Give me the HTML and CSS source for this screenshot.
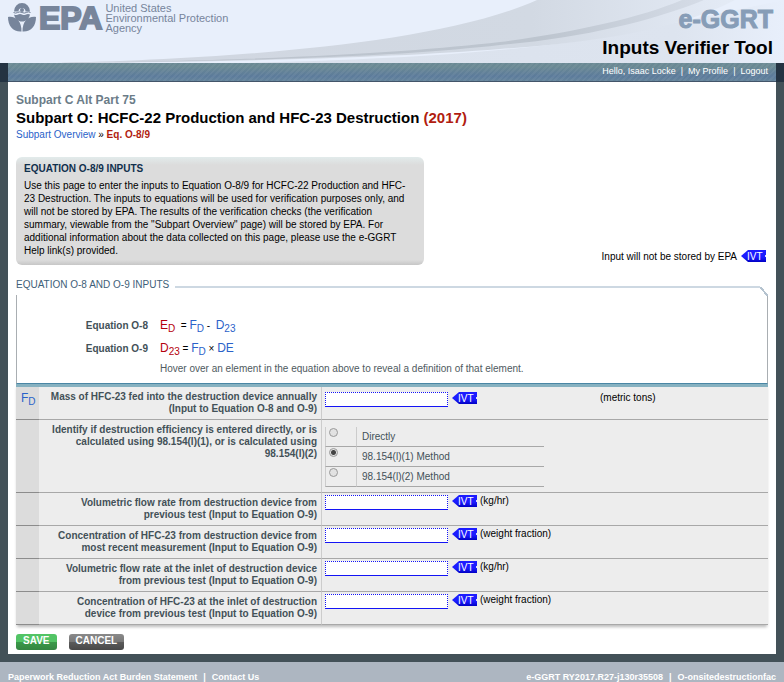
FILE: index.html
```html
<!DOCTYPE html>
<html lang="en">
<head>
  <meta charset="UTF-8" />
  <title>e-GGRT Inputs Verifier Tool</title>
  <link rel="stylesheet" href="styles.css">
</head>
<body>

  <header class="banner">
    <svg class="swoosh" viewBox="0 0 784 63" preserveAspectRatio="none">
      <defs>
        <linearGradient id="fade" x1="0" x2="1" y1="0" y2="0">
          <stop offset="0" stop-color="#dae1ec" />
          <stop offset=".8" stop-color="#dde4ef" />
          <stop offset="1" stop-color="#e8effb" />
        </linearGradient>
        <linearGradient id="fade2" x1="0" x2="1" y1="0" y2="0">
          <stop offset="0" stop-color="#d0d6e0" />
          <stop offset=".7" stop-color="#d2d9e3" />
          <stop offset="1" stop-color="#e4ebf6" />
        </linearGradient>
        <linearGradient id="fade3" x1="0" x2="1" y1="0" y2="0">
          <stop offset="0" stop-color="#bcc3cd" />
          <stop offset=".75" stop-color="#bdc5cf" />
          <stop offset="1" stop-color="#d5dce7" />
        </linearGradient>
      </defs>
      <path fill="url(#fade)" d="M240 63C400 60 560 49 640 30L784 0V63Z" />
      <path fill="url(#fade2)" d="M56 63C200 59 430 48 537 0H735C670 35 560 45 500 49C400 57 250 62 56 63Z" />
      <path fill="url(#fade3)" d="M56 63C300 60 420 51 500 42C570 33 640 18 682 0H704C650 22 580 38 500 45C420 54 300 61 56 63Z" />
    </svg>
    <div class="epa">
      <svg class="flower" viewBox="0 0 28 29" width="28" height="29">
        <g fill="#77859b">
          <path fill-rule="evenodd" d="M6 8.500a8 8.500 0 0 1 16 0H17.500a3.500 3.500 0 1 0-7 0Z" />
          <circle cx="14" cy="7" r="2" />
          <path d="M6 11.500q2 1.200 4 0t4 0t4 0t4 0C21 16 18 18.500 14 18.500S7 16 6 11.500Z" />
          <path d="M0 14C8 13 13.500 18 13.500 28.500C5 29 0 23 0 14Z" />
          <path d="M28 14C20 13 14.500 18 14.500 28.500C23 29 28 23 28 14Z" />
        </g>
        <path fill="none" stroke="#77859b" d="M5.500 9.500q2.100 1.200 4.200 0t4.300 0t4.300 0t4.200 0" />
      </svg>
      <span class="epa-name">EPA</span>
      <span class="epa-agency">United States<br>Environmental Protection<br>Agency</span>
    </div>
    <div class="product">
      <span class="product-name">e-GGRT</span>
      <span class="product-tool">Inputs Verifier Tool</span>
    </div>
  </header>

  <nav class="userbar">
    <span>Hello, Isaac Locke</span><i>|</i><a href="#">My Profile</a><i>|</i><a href="#">Logout</a>
  </nav>

  <main class="content">
    <h2>Subpart C Alt Part 75</h2>
    <h1>Subpart O: HCFC-22 Production and HFC-23 Destruction <span class="year">(2017)</span></h1>
    <div class="crumbs"><a href="#">Subpart Overview</a> » <b>Eq. O-8/9</b></div>

    <div class="intro">
      <section class="help">
        <h3>EQUATION O-8/9 INPUTS</h3>
        <p>Use this page to enter the inputs to Equation O-8/9 for HCFC-22 Production and HFC-23 Destruction. The inputs to equations will be used for verification purposes only, and will not be stored by EPA. The results of the verification checks (the verification summary, viewable from the "Subpart Overview" page) will be stored by EPA. For additional information about the data collected on this page, please use the e-GGRT Help link(s) provided.</p>
      </section>
      <div class="key">Input will not be stored by EPA <span class="ivt">IVT</span></div>
    </div>

    <form>
      <div class="legend">EQUATION O-8 AND O-9 INPUTS</div>
      <div class="equations">
        <div class="equation">
          <b>Equation O-8</b>
          <span><a class="result" href="#">E<sub>D</sub></a>&nbsp; = <a href="#">F<sub>D</sub></a> - &nbsp;<a href="#">D<sub>23</sub></a></span>
        </div>
        <div class="equation">
          <b>Equation O-9</b>
          <span><a class="result" href="#">D<sub>23</sub></a> = <a href="#">F<sub>D</sub></a> × <a href="#">DE</a></span>
        </div>
        <p>Hover over an element in the equation above to reveal a definition of that element.</p>
      </div>

      <table class="inputs">
        <tr class="first">
          <td class="symbol"><a href="#">F<sub>D</sub></a></td>
          <th><label for="mass">Mass of HFC-23 fed into the destruction device annually (Input to Equation O-8 and O-9)</label></th>
          <td><div class="field"><input type="text" id="mass"><span class="ivt">IVT</span><span class="unit wide">(metric tons)</span></div></td>
        </tr>
        <tr class="choice">
          <td class="symbol"></td>
          <th>Identify if destruction efficiency is entered directly, or is calculated using 98.154(l)(1), or is calculated using 98.154(l)(2)</th>
          <td>
            <table class="methods">
              <tr><td><input type="radio" name="method" id="m0"></td><td><label for="m0">Directly</label></td></tr>
              <tr><td><input type="radio" name="method" id="m1" checked></td><td><label for="m1">98.154(l)(1) Method</label></td></tr>
              <tr><td><input type="radio" name="method" id="m2"></td><td><label for="m2">98.154(l)(2) Method</label></td></tr>
            </table>
          </td>
        </tr>
        <tr>
          <td class="symbol"></td>
          <th><label for="flowOut">Volumetric flow rate from destruction device from previous test (Input to Equation O-9)</label></th>
          <td><div class="field"><input type="text" id="flowOut"><span class="ivt">IVT</span><span class="unit">(kg/hr)</span></div></td>
        </tr>
        <tr>
          <td class="symbol"></td>
          <th><label for="concOut">Concentration of HFC-23 from destruction device from most recent measurement (Input to Equation O-9)</label></th>
          <td><div class="field"><input type="text" id="concOut"><span class="ivt">IVT</span><span class="unit">(weight fraction)</span></div></td>
        </tr>
        <tr>
          <td class="symbol"></td>
          <th><label for="flowIn">Volumetric flow rate at the inlet of destruction device from previous test (Input to Equation O-9)</label></th>
          <td><div class="field"><input type="text" id="flowIn"><span class="ivt">IVT</span><span class="unit">(kg/hr)</span></div></td>
        </tr>
        <tr>
          <td class="symbol"></td>
          <th><label for="concIn">Concentration of HFC-23 at the inlet of destruction device from previous test (Input to Equation O-9)</label></th>
          <td><div class="field"><input type="text" id="concIn"><span class="ivt">IVT</span><span class="unit">(weight fraction)</span></div></td>
        </tr>
      </table>

      <div class="actions">
        <button type="button" class="save">SAVE</button>
        <button type="button" class="cancel">CANCEL</button>
      </div>
    </form>
  </main>

  <footer class="footer">
    <div><a href="#">Paperwork Reduction Act Burden Statement</a><i>|</i><a href="#">Contact Us</a></div>
    <div>e-GGRT RY2017.R27-j130r35508<i>|</i>O-onsitedestructionfac</div>
  </footer>

</body>
</html>
```
FILE: styles.css
```css
* {
  box-sizing: border-box;
}

body {
  margin: 0;
  font-family: Arial, "Liberation Sans", sans-serif;
  font-size: 10px;
  line-height: 13px;
  color: #000;
  background: #435158;
}

a {
  color: #2a62c9;
  text-decoration: none;
}

i {
  font-style: normal;
}

/* banner */
.banner {
  position: relative;
  display: flex;
  justify-content: space-between;
  height: 63px;
  padding: 3px 11px 0 8px;
  overflow: hidden;
  background: #e8effb;
}

.swoosh {
  position: absolute;
  top: 0;
  left: 0;
  width: 100%;
  height: 100%;
}

.epa,
.product {
  position: relative;
  display: flex;
}

.epa {
  align-items: flex-start;
  color: #77859b;
}

.epa-name {
  padding-left: 3px;
  font-size: 32px;
  font-weight: bold;
  line-height: 30px;
  -webkit-text-stroke: 2px #77859b;
}

.epa-agency {
  padding-left: 3px;
  font-size: 11px;
  line-height: 10px;
}

.product {
  flex-direction: column;
  align-items: flex-end;
  font-weight: bold;
}

.product-name {
  font-size: 25px;
  line-height: 32px;
  color: #879db7;
  -webkit-text-stroke: 1px #879db7;
}

.product-tool {
  font-size: 19px;
  line-height: 25px;
}

/* user bar */
.userbar {
  height: 19px;
  padding-right: 8px;
  border: solid #243342;
  border-width: 0 8px;
  box-shadow: inset 0 -1px #43556a;
  background:
    repeating-linear-gradient(135deg, transparent 0 2px, #ffffff0d 2px 4px),
    linear-gradient(#6a8994 20%, #5c7b9b 70%, #66869b);
  text-align: right;
  font-size: 9px;
  line-height: 16px;
  color: #fff;
}

.userbar a,
.footer a {
  color: #fff;
}

.userbar i {
  padding: 0 5px;
}

/* page */
.content {
  margin: 0 8px 8px;
  padding: 11px 8px 4px;
  background: #fff;
}

h2 {
  margin: 0;
  font-size: 12px;
  line-height: 14px;
  color: #6b7c88;
}

h1 {
  margin: 0;
  font-size: 15px;
  line-height: 22px;
}

.year {
  color: #b11d10;
}

.crumbs {
  line-height: 12px;
}

.crumbs b {
  color: #b11d10;
}

.intro {
  display: flex;
  justify-content: space-between;
  align-items: flex-end;
  margin-top: 16px;
}

.help {
  width: 408px;
  min-height: 108px;
  padding: 6px 8px;
  border-radius: 6px;
  background: linear-gradient(#e2ebeb, #dcdcdc 8px, #dcdcdc 103px, #c6c6c6);
}

.help h3 {
  margin: 0 0 4px;
  font-size: 10px;
  line-height: 12px;
  color: #10304d;
}

.help p {
  margin: 0;
}

.key {
  display: flex;
  gap: 4px;
  padding: 0 2px 2px 0;
}

.ivt {
  position: relative;
  width: 25px;
  height: 12px;
  padding-left: 6px;
  background: linear-gradient(#1c1cff 60%, #0000c4);
  clip-path: polygon(0 50%, 7px 0, 100% 0, 100% 100%, 7px 100%);
  font-size: 10px;
  line-height: 13px;
  color: #fff;
}

.ivt::after {
  content: "";
  position: absolute;
  top: 5px;
  right: 0;
  width: 1px;
  height: 2px;
  background: #dcdcff;
}

/* equations */
.legend {
  display: flex;
  align-items: center;
  gap: 6px;
  height: 14px;
  margin-top: 12px;
  color: #3e6078;
}

.legend::after {
  content: "";
  flex: 1;
  height: 2px;
  margin: 5px 8px 0 0;
  background: #cdd8e2;
}

.equations {
  position: relative;
  min-height: 89px;
  margin-top: 4px;
  padding-top: 19px;
  border: solid #a9aeb2;
  border-width: 0 1px 1px;
  border-bottom-color: #4a86a5;
}

/* cut corner */
.equations::before {
  content: "";
  position: absolute;
  top: -8px;
  right: -1px;
  width: 8px;
  height: 9px;
  background: linear-gradient(to top right, #fff 42%, #b5c3cf 42%, #b5c3cf 58%, #fff 58%);
}

.equation {
  display: flex;
  align-items: center;
  height: 23px;
}

.equation b {
  width: 131px;
  margin-right: 12px;
  text-align: right;
  color: #435158;
}

.equation a,
.symbol a {
  font-size: 12px;
}

sub {
  font-size: 10px;
  line-height: 0;
}

.equation .result {
  color: #b5000d;
}

.equations p {
  margin: 2px 0 0 143px;
  color: #4f5a60;
}

/* inputs */
table {
  border-spacing: 0;
}

.inputs {
  width: 100%;
  border-top: 3px solid #86b1c0;
  box-shadow: 0 3px 3px -1px #bbb;
  background: #ededed;
}

.inputs th,
.inputs td {
  height: 33px;
  padding: 4px 4px 3px;
  border-bottom: 1px solid #a8a8a8;
  vertical-align: top;
}

.inputs th {
  width: 283px;
  padding-left: 6px;
  border-right: 1px solid #ccc;
  text-align: right;
  line-height: 12px;
  color: #435158;
}

.inputs td {
  padding: 2px 3px 0;
}

.inputs .first td {
  padding-top: 5px;
}

.inputs .symbol {
  width: 23px;
  padding-left: 5px;
  border-color: #8c8c8c;
  background: #dcdcdc;
}

.inputs .choice > * {
  height: 73px;
}

.field {
  display: flex;
}

.field input {
  width: 123px;
  height: 15px;
  margin-right: 4px;
  padding: 0 2px;
  border: 1px dotted #1414f5;
  border-bottom-style: solid;
  background: #fff;
}

.unit {
  margin-left: 3px;
  line-height: 12px;
}

.unit.wide {
  margin-left: 123px;
}

.inputs .methods {
  width: 219px;
  margin-top: 5px;
}

.inputs .methods td {
  height: 20px;
  padding: 3px 5px 0;
  border-left: 1px solid #ccc;
  color: #435158;
}

.inputs .methods td:first-child {
  width: 31px;
  padding: 0 3px;
}

.methods input {
  appearance: none;
  display: block;
  width: 9px;
  height: 9px;
  margin: 1px 0;
  border: 1px solid #999;
  border-radius: 50%;
  background: #e2e2e2;
}

.methods input:checked {
  background: radial-gradient(circle, #444 2px, #e2e2e2 3px);
}

/* buttons */
.actions {
  display: flex;
  gap: 12px;
  margin-top: 9px;
}

button {
  height: 16px;
  padding: 0 7px 2px;
  border: 0;
  border-radius: 3px;
  font: bold 10px/14px Arial, "Liberation Sans", sans-serif;
  color: #fff;
}

.save {
  background: linear-gradient(#52c465 50%, #3a9a49 50%, #358542);
}

.cancel {
  background: linear-gradient(#8a8a8a, #777 50%, #5c5c5c 50%, #484848);
}

/* footer */
.footer {
  display: flex;
  justify-content: space-between;
  padding: 9px 8px 0;
  min-height: 20px;
  background: #adb6c1;
  font-size: 9px;
  font-weight: bold;
  line-height: 12px;
  color: #fff;
}

.footer i {
  padding: 0 6px;
}
```
